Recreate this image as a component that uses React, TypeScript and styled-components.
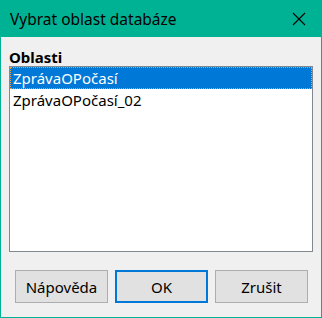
import React from "react";
import styled, { createGlobalStyle } from "styled-components";

const Global = createGlobalStyle`
  html, body { margin: 0; padding: 0; background: #f0f0f0; }
  body { font-family: "Noto Sans", "Open Sans", sans-serif; }
`;

const Window = styled.div`
  width: 322px;
  height: 318px;
  box-sizing: border-box;
  border: 1px solid #00b294;
  border-top: none;
  background: #f0f0f0;
  display: flex;
  flex-direction: column;
`;

const TitleBar = styled.div`
  height: 37px;
  margin: 0 -1px;
  background: #00b294;
  display: flex;
  align-items: center;
  justify-content: space-between;
  padding: 0 0 0 10px;
  flex-shrink: 0;
`;

const Title = styled.div`
  font-size: 15.5px;
  color: #000;
`;

const CloseBtn = styled.div`
  width: 46px;
  height: 37px;
  display: flex;
  align-items: center;
  justify-content: center;
`;

const Body = styled.div`
  flex: 1;
  display: flex;
  flex-direction: column;
  padding: 11px 8px 15px 8px;
`;

const Label = styled.div`
  font-weight: bold;
  font-size: 15px;
  line-height: 18px;
  color: #000;
  height: 18px;
`;

const ListBox = styled.div`
  height: 186px;
  box-sizing: border-box;
  border: 1px solid #828790;
  background: #fff;
  display: flex;
  flex-direction: column;
  width: 304px;
`;

const Item = styled.div<{ $selected?: boolean }>`
  height: 22px;
  box-sizing: border-box;
  padding: 0 2px;
  font-size: 15px;
  line-height: 20px;
  color: ${(p) => (p.$selected ? "#fff" : "#000")};
  background: ${(p) => (p.$selected ? "#0078d7" : "transparent")};
  border: 1px ${(p) => (p.$selected ? "dotted #e8a050" : "solid transparent")};
`;

const Buttons = styled.div`
  display: flex;
  gap: 7px;
  margin-top: 18px;
  padding-left: 6px;
`;

const Button = styled.button<{ $default?: boolean }>`
  width: 93px;
  height: 33px;
  box-sizing: border-box;
  background: #e1e1e1;
  border: ${(p) => (p.$default ? "2px solid #0078d7" : "1px solid #adadad")};
  font-family: "Noto Sans", "Open Sans", sans-serif;
  font-size: 15px;
  color: #000;
  padding: 0;
`;

export default function App() {
  return (
    <>
      <Global />
      <Window>
        <TitleBar>
          <Title>Vybrat oblast databáze</Title>
          <CloseBtn>
            <svg width="14" height="14" viewBox="0 0 14 14">
              <path d="M1 1 L13 13 M13 1 L1 13" stroke="#000" strokeWidth="1.1" />
            </svg>
          </CloseBtn>
        </TitleBar>
        <Body>
          <Label>Oblasti</Label>
          <ListBox>
            <Item $selected>ZprávaOPočasí</Item>
            <Item>ZprávaOPočasí_02</Item>
          </ListBox>
          <Buttons>
            <Button>Nápověda</Button>
            <Button $default>OK</Button>
            <Button>Zrušit</Button>
          </Buttons>
        </Body>
      </Window>
    </>
  );
}
